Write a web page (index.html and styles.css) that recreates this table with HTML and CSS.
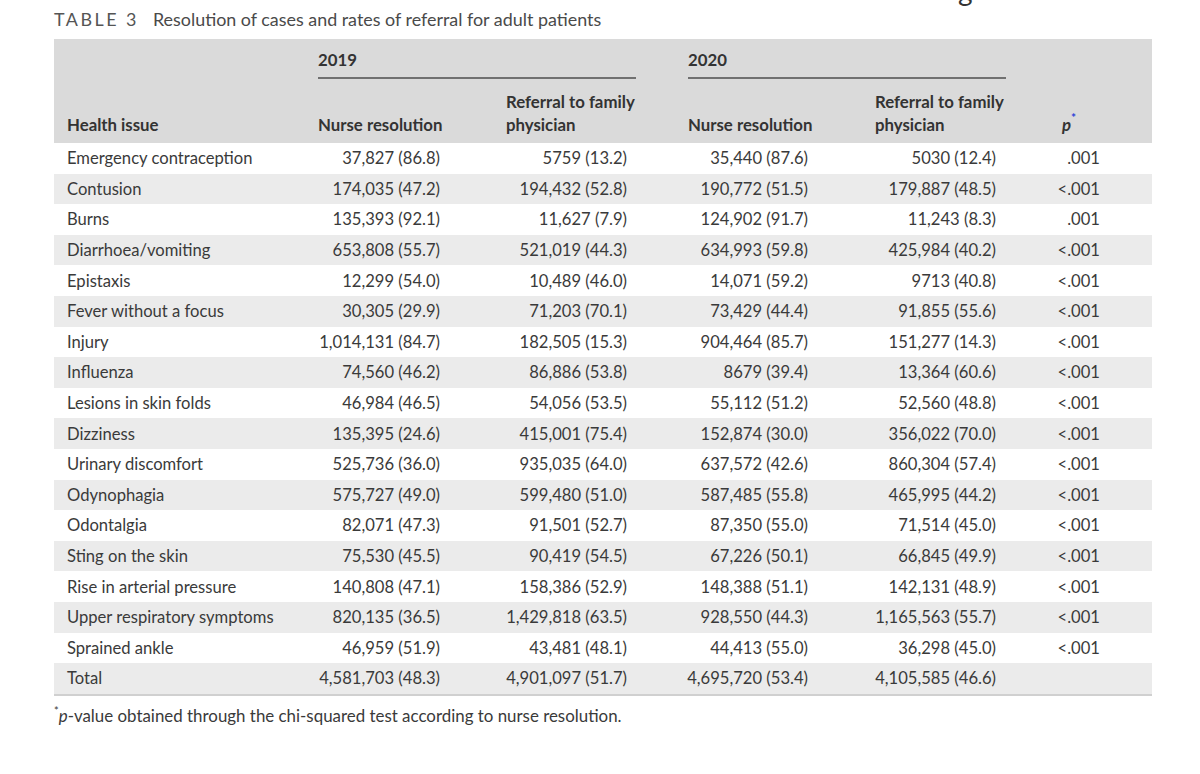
FILE: index.html
```html
<!DOCTYPE html>
<html lang="en">
<head>
<meta charset="utf-8">
<title>Table 3</title>
<link rel="stylesheet" href="styles.css">
</head>
<body>
<div class="page">
  <div class="cut-heading">g</div>
  <div class="caption"><span class="label">TABLE 3</span><span class="caption-text">Resolution of cases and rates of referral for adult patients</span></div>
  <table class="data">
    <colgroup>
      <col class="c1"><col class="c2"><col class="c3"><col class="c4"><col class="c5"><col class="c6">
    </colgroup>
    <thead>
      <tr class="years">
        <th class="issue" rowspan="2">Health issue</th>
        <th colspan="2" class="year"><div class="year-line">2019</div></th>
        <th colspan="2" class="year"><div class="year-line">2020</div></th>
        <th class="pcol" rowspan="2"><span class="pi">p</span><sup class="star">*</sup></th>
      </tr>
      <tr class="sub">
        <th>Nurse resolution</th>
        <th>Referral to family<br>physician</th>
        <th>Nurse resolution</th>
        <th>Referral to family<br>physician</th>
      </tr>
    </thead>
    <tbody>
      <tr><td>Emergency contraception</td><td>37,827 (86.8)</td><td>5759 (13.2)</td><td>35,440 (87.6)</td><td>5030 (12.4)</td><td>.001</td></tr>
      <tr><td>Contusion</td><td>174,035 (47.2)</td><td>194,432 (52.8)</td><td>190,772 (51.5)</td><td>179,887 (48.5)</td><td>&lt;.001</td></tr>
      <tr><td>Burns</td><td>135,393 (92.1)</td><td>11,627 (7.9)</td><td>124,902 (91.7)</td><td>11,243 (8.3)</td><td>.001</td></tr>
      <tr><td>Diarrhoea/vomiting</td><td>653,808 (55.7)</td><td>521,019 (44.3)</td><td>634,993 (59.8)</td><td>425,984 (40.2)</td><td>&lt;.001</td></tr>
      <tr><td>Epistaxis</td><td>12,299 (54.0)</td><td>10,489 (46.0)</td><td>14,071 (59.2)</td><td>9713 (40.8)</td><td>&lt;.001</td></tr>
      <tr><td>Fever without a focus</td><td>30,305 (29.9)</td><td>71,203 (70.1)</td><td>73,429 (44.4)</td><td>91,855 (55.6)</td><td>&lt;.001</td></tr>
      <tr><td>Injury</td><td>1,014,131 (84.7)</td><td>182,505 (15.3)</td><td>904,464 (85.7)</td><td>151,277 (14.3)</td><td>&lt;.001</td></tr>
      <tr><td>Influenza</td><td>74,560 (46.2)</td><td>86,886 (53.8)</td><td>8679 (39.4)</td><td>13,364 (60.6)</td><td>&lt;.001</td></tr>
      <tr><td>Lesions in skin folds</td><td>46,984 (46.5)</td><td>54,056 (53.5)</td><td>55,112 (51.2)</td><td>52,560 (48.8)</td><td>&lt;.001</td></tr>
      <tr><td>Dizziness</td><td>135,395 (24.6)</td><td>415,001 (75.4)</td><td>152,874 (30.0)</td><td>356,022 (70.0)</td><td>&lt;.001</td></tr>
      <tr><td>Urinary discomfort</td><td>525,736 (36.0)</td><td>935,035 (64.0)</td><td>637,572 (42.6)</td><td>860,304 (57.4)</td><td>&lt;.001</td></tr>
      <tr><td>Odynophagia</td><td>575,727 (49.0)</td><td>599,480 (51.0)</td><td>587,485 (55.8)</td><td>465,995 (44.2)</td><td>&lt;.001</td></tr>
      <tr><td>Odontalgia</td><td>82,071 (47.3)</td><td>91,501 (52.7)</td><td>87,350 (55.0)</td><td>71,514 (45.0)</td><td>&lt;.001</td></tr>
      <tr><td>Sting on the skin</td><td>75,530 (45.5)</td><td>90,419 (54.5)</td><td>67,226 (50.1)</td><td>66,845 (49.9)</td><td>&lt;.001</td></tr>
      <tr><td>Rise in arterial pressure</td><td>140,808 (47.1)</td><td>158,386 (52.9)</td><td>148,388 (51.1)</td><td>142,131 (48.9)</td><td>&lt;.001</td></tr>
      <tr><td>Upper respiratory symptoms</td><td>820,135 (36.5)</td><td>1,429,818 (63.5)</td><td>928,550 (44.3)</td><td>1,165,563 (55.7)</td><td>&lt;.001</td></tr>
      <tr><td>Sprained ankle</td><td>46,959 (51.9)</td><td>43,481 (48.1)</td><td>44,413 (55.0)</td><td>36,298 (45.0)</td><td>&lt;.001</td></tr>
      <tr class="total"><td>Total</td><td>4,581,703 (48.3)</td><td>4,901,097 (51.7)</td><td>4,695,720 (53.4)</td><td>4,105,585 (46.6)</td><td></td></tr>
    </tbody>
  </table>
  <p class="footnote"><sup class="fstar">*</sup><i>p</i>-value obtained through the chi-squared test according to nurse resolution.</p>
</div>
</body>
</html>
```

FILE: styles.css
```css
html, body {
  margin: 0;
  padding: 0;
  background: #ffffff;
}

body {
  font-family: Lato, "Open Sans", "Liberation Sans", sans-serif;
  color: #3a3a3a;
  font-size: 16.6px;
}

.page {
  position: relative;
  padding: 0 0 0 54px;
  width: 1098px;
}

.cut-heading {
  position: absolute;
  left: 958px;
  top: -24px;
  font-size: 28px;
  line-height: 28px;
  color: #333;
}

.caption {
  padding-top: 8px;
  height: 22px;
  line-height: 22px;
  color: #4a4a4a;
  font-size: 17.9px;
  white-space: nowrap;
}

.label {
  letter-spacing: 2.5px;
  margin-right: 14px;
  color: #555;
}

.data {
  margin-top: 9px;
  width: 1098px;
  border-collapse: collapse;
  table-layout: fixed;
  border-bottom: 2px solid #d0d0d0;
  font-size: 16.6px;
}

.c1 { width: 251px; }
.c2 { width: 188px; }
.c3 { width: 182px; }
.c4 { width: 187px; }
.c5 { width: 187px; }
.c6 { width: 103px; }

thead th {
  background: #dadada;
  font-weight: 700;
  text-align: left;
  vertical-align: bottom;
  color: #333;
  line-height: 23px;
  font-size: 16.8px;
  padding: 0 0 0 13px;
}

.years th {
  padding-bottom: 5px;
}

.year-line {
  width: 318px;
  padding: 11px 0 7px;
  line-height: 20px;
  border-bottom: 2px solid #707070;
}

.sub th {
  padding-top: 6px;
  padding-bottom: 7px;
}

.issue {
  padding-bottom: 7px !important;
}

.pcol {
  padding-bottom: 7px !important;
}

.pi {
  font-style: italic;
}

.star {
  color: #2a3fd8;
  font-size: 12px;
  font-weight: 700;
  vertical-align: top;
  line-height: 10px;
  position: relative;
  top: 0px;
  left: 0px;
}

tbody td {
  height: 30.6px;
  padding: 0 0 0 0;
  text-align: right;
  line-height: 20px;
  white-space: nowrap;
}

tbody tr:nth-child(even) td {
  background: #ebebeb;
}

tbody td:nth-child(1) {
  text-align: left;
  padding-left: 13px;
}

tbody td:nth-child(2) { padding-right: 53px; }
tbody td:nth-child(3) { padding-right: 48px; }
tbody td:nth-child(4) { padding-right: 54px; }
tbody td:nth-child(5) { padding-right: 53px; }
tbody td:nth-child(6) { padding-right: 52px; }

.footnote {
  margin: 7px 0 0 0;
  line-height: 26px;
  color: #3a3a3a;
  font-size: 16.9px;
}

.fstar {
  font-size: 11px;
  vertical-align: top;
  line-height: 10px;
  position: relative;
  top: 3px;
}
```
